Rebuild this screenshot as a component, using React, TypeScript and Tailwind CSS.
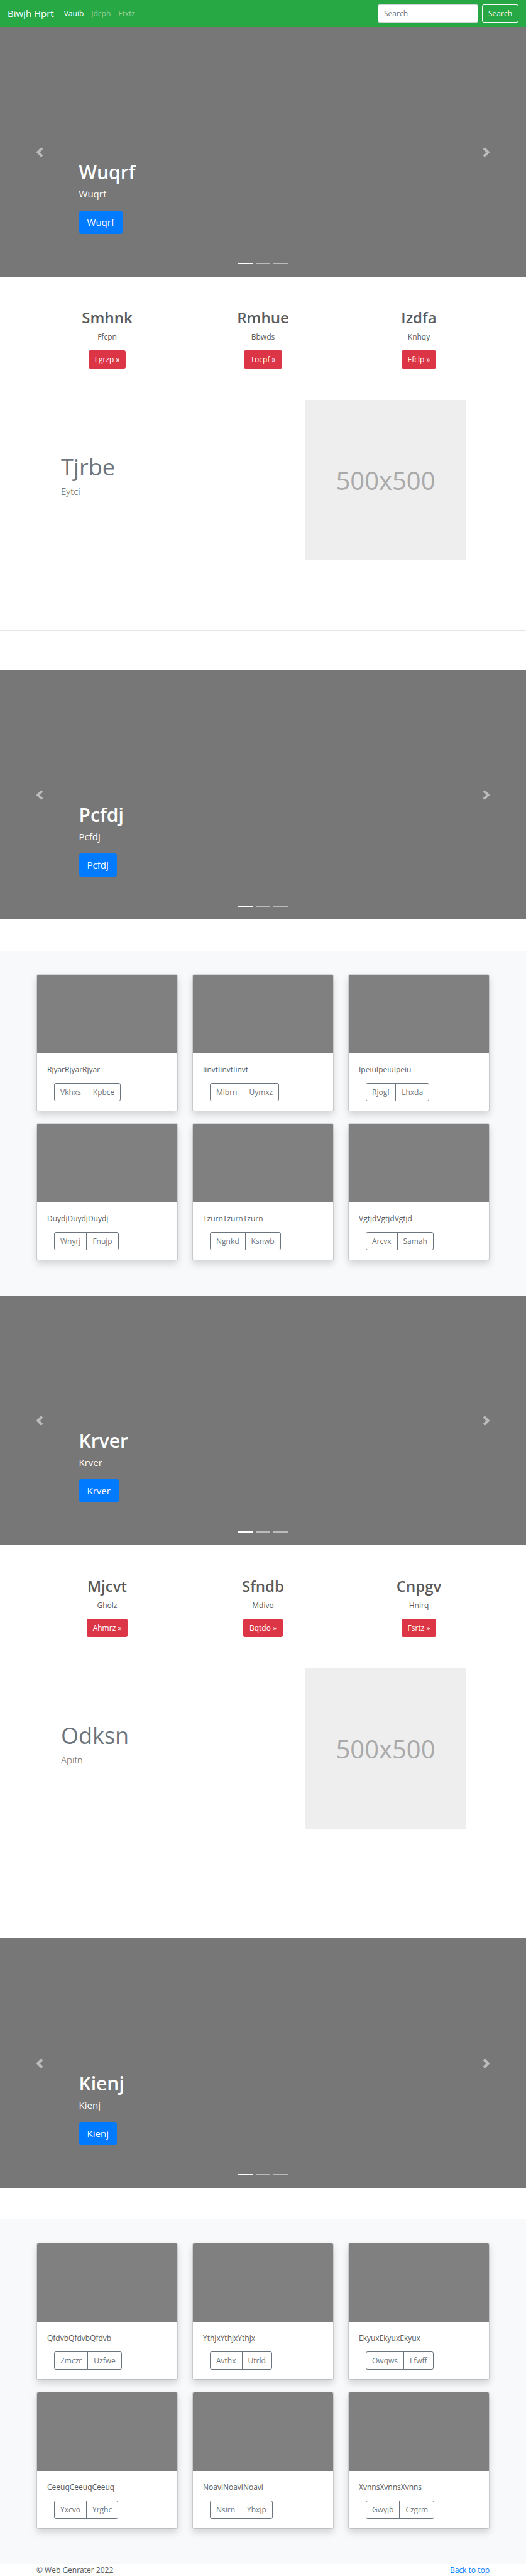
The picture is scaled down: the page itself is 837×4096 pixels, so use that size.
type Feature = { title: string; text: string; action: string };
type Tile = { title: string; actions: [string, string] };

const navLinks = [
  { label: "Vauib", active: true },
  { label: "Jdcph", active: false },
  { label: "Ftxtz", active: false },
];

const firstFeatures: Feature[] = [
  { title: "Smhnk", text: "Ffcpn", action: "Lgrzp »" },
  { title: "Rmhue", text: "Bbwds", action: "Tocpf »" },
  { title: "Izdfa", text: "Knhqy", action: "Efclp »" },
];

const secondFeatures: Feature[] = [
  { title: "Mjcvt", text: "Gholz", action: "Ahmrz »" },
  { title: "Sfndb", text: "Mdivo", action: "Bqtdo »" },
  { title: "Cnpgv", text: "Hnirq", action: "Fsrtz »" },
];

const firstTiles: Tile[] = [
  { title: "RjyarRjyarRjyar", actions: ["Vkhxs", "Kpbce"] },
  { title: "IinvtIinvtIinvt", actions: ["Mibrn", "Uymxz"] },
  { title: "IpeiuIpeiuIpeiu", actions: ["Rjogf", "Lhxda"] },
  { title: "DuydjDuydjDuydj", actions: ["Wnyrj", "Fnujp"] },
  { title: "TzurnTzurnTzurn", actions: ["Ngnkd", "Ksnwb"] },
  { title: "VgtjdVgtjdVgtjd", actions: ["Arcvx", "Samah"] },
];

const secondTiles: Tile[] = [
  { title: "QfdvbQfdvbQfdvb", actions: ["Zmczr", "Uzfwe"] },
  { title: "YthjxYthjxYthjx", actions: ["Avthx", "Utrld"] },
  { title: "EkyuxEkyuxEkyux", actions: ["Owqws", "Lfwff"] },
  { title: "CeeuqCeeuqCeeuq", actions: ["Yxcvo", "Yrghc"] },
  { title: "NoaviNoaviNoavi", actions: ["Nsirn", "Ybxjp"] },
  { title: "XvnnsXvnnsXvnns", actions: ["Gwyjb", "Czgrm"] },
];

function Navbar() {
  return (
    <header className="flex items-center bg-[#28a745] px-3 py-[7px] text-white">
      <a href="#" className="mr-4 text-[15px] leading-[23px]">
        Biwjh Hprt
      </a>
      <nav className="flex flex-1 gap-3 leading-[19px]">
        {navLinks.map((link) => (
          <a key={link.label} href="#" className={link.active ? "text-white" : "text-white/50"}>
            {link.label}
          </a>
        ))}
      </nav>
      <form className="flex gap-[6px]" onSubmit={(event) => event.preventDefault()}>
        <input
          type="text"
          aria-label="Search"
          placeholder="Search"
          className="h-[29px] w-40 rounded-[3px] border border-[#ced4da] bg-white px-[9px] text-[#495057] placeholder:text-[#6c757d]"
        />
        <button type="submit" className="h-[29px] rounded-[3px] border border-[#f8f9fa] px-[9px] text-[#f8f9fa]">
          Search
        </button>
      </form>
    </header>
  );
}

function Chevron({ flipped = false }: { flipped?: boolean }) {
  return (
    <svg viewBox="0 0 8 8" className="size-4" fill="#fff" aria-hidden="true">
      {flipped ? (
        <path d="M2.75 0l-1.5 1.5 2.5 2.5-2.5 2.5 1.5 1.5 4-4-4-4z" />
      ) : (
        <path d="M5.25 0l-4 4 4 4 1.5-1.5-2.5-2.5 2.5-2.5-1.5-1.5z" />
      )}
    </svg>
  );
}

function Hero({ title }: { title: string }) {
  return (
    <section className="relative h-[397px] bg-[#777] text-white">
      <div className="absolute inset-x-[15%] bottom-[68px] flex flex-col items-start">
        <h1 className="mb-[5px] text-[30px] leading-[37px] font-semibold">{title}</h1>
        <p className="mb-[15px] text-[15px] leading-[23px]">{title}</p>
        <a href="#" className="rounded-[4px] bg-[#007bff] px-[13px] py-[7px] text-[15px] leading-[23px]">
          {title}
        </a>
      </div>
      <button
        type="button"
        aria-label="Previous"
        className="absolute inset-y-0 left-0 flex w-[15%] items-center justify-center opacity-50"
      >
        <Chevron />
      </button>
      <button
        type="button"
        aria-label="Next"
        className="absolute inset-y-0 right-0 flex w-[15%] items-center justify-center opacity-50"
      >
        <Chevron flipped />
      </button>
      <div className="absolute inset-x-0 bottom-5 flex justify-center gap-[5px]">
        <span className="h-[2px] w-[23px] bg-white" />
        <span className="h-[2px] w-[23px] bg-white/50" />
        <span className="h-[2px] w-[23px] bg-white/50" />
      </div>
    </section>
  );
}

function Marketing({ features, title, text }: { features: Feature[]; title: string; text: string }) {
  return (
    <>
      <section className="mx-auto max-w-[745px] px-3 pt-[50px]">
        <div className="grid grid-cols-3 gap-[23px] text-center">
          {features.map((feature) => (
            <div key={feature.title} className="flex flex-col items-center">
              <h2 className="mb-[6px] text-[24px] leading-[30px] font-semibold">{feature.title}</h2>
              <p className="mb-3 leading-[19px]">{feature.text}</p>
              <a href="#" className="rounded-[3px] bg-[#dc3545] px-[10px] py-[5px] leading-[19px] text-white">
                {feature.action}
              </a>
            </div>
          ))}
        </div>
        <div className="mt-[50px] mb-[111px] flex items-center justify-between pr-[38px] pl-[39px]">
          <div>
            <h2 className="mb-1 text-[36px] leading-[47px] text-[#6c757d]">{title}</h2>
            <p className="mb-4 text-[15px] leading-[23px] font-light">{text}</p>
          </div>
          <div className="flex size-[255px] items-center justify-center bg-[#eee] text-[40px] leading-[54px] text-[#aaa]">
            500x500
          </div>
        </div>
      </section>
      <hr className="mb-[62px] border-black/10" />
    </>
  );
}

function Album({ tiles }: { tiles: Tile[] }) {
  return (
    <section className="mt-[50px] bg-[#f8f9fa] pt-[37px] pb-14">
      <div className="mx-auto grid max-w-[745px] grid-cols-3 gap-x-[23px] gap-y-[19px] px-3">
        {tiles.map((tile) => (
          <article
            key={tile.title}
            className="overflow-hidden rounded-[3px] border border-black/12 bg-white bg-clip-padding shadow-[0_6px_12px_rgba(0,0,0,0.15)]"
          >
            <div className="h-[125px] bg-[#808080]" />
            <div className="px-4 pt-4 pb-[15px]">
              <p className="mb-3 leading-[19px]">{tile.title}</p>
              <div className="ml-[11px] flex text-[#6c757d]">
                <button type="button" className="h-[29px] rounded-l-[3px] border border-[#6c757d] px-[9px]">
                  {tile.actions[0]}
                </button>
                <button type="button" className="-ml-px h-[29px] rounded-r-[3px] border border-[#6c757d] px-[9px]">
                  {tile.actions[1]}
                </button>
              </div>
            </div>
          </article>
        ))}
      </div>
    </section>
  );
}

export default function App() {
  return (
    <div className="bg-white font-['Open_Sans','Noto_Sans',sans-serif] text-[12px] text-[#5a5a5a]">
      <Navbar />
      <main>
        <Hero title="Wuqrf" />
        <Marketing features={firstFeatures} title="Tjrbe" text="Eytci" />
        <Hero title="Pcfdj" />
        <Album tiles={firstTiles} />
        <Hero title="Krver" />
        <Marketing features={secondFeatures} title="Odksn" text="Apifn" />
        <Hero title="Kienj" />
        <Album tiles={secondTiles} />
      </main>
      <footer className="mx-auto flex max-w-[745px] justify-between px-3 leading-[19px]">
        <p>© Web Genrater 2022</p>
        <a href="#" className="text-[#007bff]">
          Back to top
        </a>
      </footer>
    </div>
  );
}
